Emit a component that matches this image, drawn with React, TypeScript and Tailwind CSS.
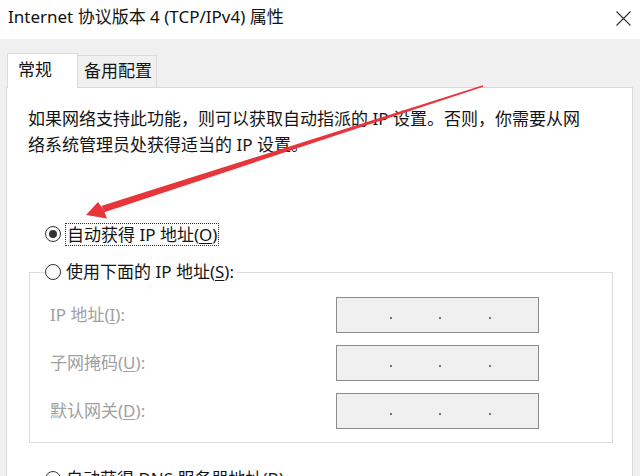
const font = { fontFamily: '"Noto Sans", "Noto Sans CJK SC", sans-serif' };

function Radio({ checked }: { checked?: boolean }) {
  return (
    <span className="flex h-[16px] w-[16px] shrink-0 items-center justify-center rounded-full border border-[#333] bg-white">
      {checked && <span className="h-[8px] w-[8px] rounded-full bg-[#333]" />}
    </span>
  );
}

function IpBox() {
  return (
    <div className="flex h-[36px] w-[203px] items-center border-[1.5px] border-[#8c8c8c] bg-[#f0f0f0]">
      <span className="w-[53px]" />
      <span className="mt-[5px] h-[2px] w-[2px] bg-[#777]" />
      <span className="w-[47px]" />
      <span className="mt-[5px] h-[2px] w-[2px] bg-[#777]" />
      <span className="w-[48px]" />
      <span className="mt-[5px] h-[2px] w-[2px] bg-[#777]" />
    </div>
  );
}

function Field({ label, keyChar }: { label: string; keyChar: string }) {
  return (
    <div className="grid h-[36px] grid-cols-[286px_203px] items-center">
      <span className="text-[#a0a0a0]">
        {label}(<span className="underline underline-offset-2">{keyChar}</span>):
      </span>
      <IpBox />
    </div>
  );
}

export default function App() {
  return (
    <div
      className="relative h-[476px] w-[640px] overflow-hidden bg-[#f0f0f0] text-[17px] leading-[24px] text-[#141414]"
      style={font}
    >
      {/* title bar */}
      <div className="flex h-[39px] items-center justify-between bg-white pb-[5px] pl-[8px] pr-[9px]">
        <span className="whitespace-nowrap text-[#111]">Internet 协议版本 4 (TCP/IPv4) 属性</span>
        <svg width="15" height="15" viewBox="0 0 15 15" className="mt-[2px]">
          <path d="M0.5 0.5 L14.5 14.5 M14.5 0.5 L0.5 14.5" stroke="#333" strokeWidth="1.1" fill="none" />
        </svg>
      </div>

      {/* tabs */}
      <div className="flex h-[48px] items-end pl-[7px]">
        <div className="relative z-10 -mb-px flex h-[35px] w-[71px] items-start border border-b-0 border-[#d9d9d9] bg-white pl-[10px] pt-[4px]">
          常规
        </div>
        <div className="flex h-[32px] w-[79px] items-start border-r border-t border-[#d9d9d9] bg-[#f0f0f0] pl-[6px] pt-[3px]">
          备用配置
        </div>
      </div>

      {/* panel */}
      <div className="ml-[6px] h-[400px] w-[627px] border border-[#d9d9d9] bg-white">
        <p className="whitespace-nowrap pl-[21px] pt-[18px] leading-[26px]">
          如果网络支持此功能，则可以获取自动指派的 IP 设置。否则，你需要从网
          <br />
          络系统管理员处获得适当的 IP 设置。
        </p>

        <div className="ml-[38px] mt-[64px] flex h-[24px] items-center">
          <Radio checked />
          <span className="ml-[4px] whitespace-nowrap border border-dotted border-[#333] px-[1px] leading-[21px]">
            自动获得 IP 地址(<span className="underline underline-offset-2">O</span>)
          </span>
        </div>

        <fieldset className="ml-[22px] mt-[14px] w-[584px] border border-[#dcdcdc] p-0">
          <legend className="ml-[15px] flex h-[24px] items-center bg-white pr-[2px]">
            <Radio />
            <span className="ml-[5px] whitespace-nowrap">
              使用下面的 IP 地址(<span className="underline underline-offset-2">S</span>):
            </span>
          </legend>
          <div className="flex flex-col gap-[12px] pb-[13px] pl-[20px] pt-[13px]">
            <Field label="IP 地址" keyChar="I" />
            <Field label="子网掩码" keyChar="U" />
            <Field label="默认网关" keyChar="D" />
          </div>
        </fieldset>

        <div className="ml-[38px] mt-[24px] flex h-[24px] items-center">
          <Radio />
          <span className="ml-[5px] whitespace-nowrap">
            自动获得 DNS 服务器地址(<span className="underline underline-offset-2">B</span>)
          </span>
        </div>
      </div>

      {/* red annotation arrow */}
      <svg
        className="pointer-events-none absolute left-0 top-0"
        width="640"
        height="476"
        viewBox="0 0 640 476"
      >
        <polygon points="482.8,85.3 483.2,86.7 104.2,212.2 101.8,205.8" fill="#e8353a" />
        <polygon points="86,215 107,218.5 103.5,209.5 98,202" fill="#e8353a" />
      </svg>
    </div>
  );
}
